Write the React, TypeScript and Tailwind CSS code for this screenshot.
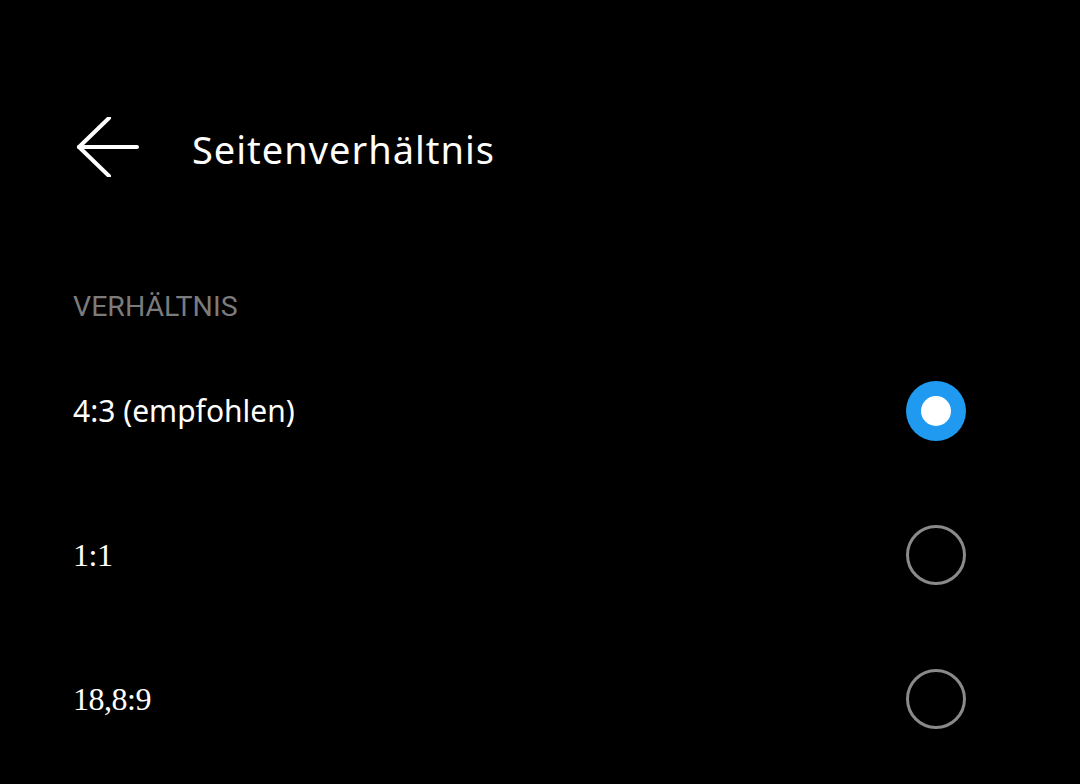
import React from "react";

const rows = [
  { label: "4:3 (empfohlen)", selected: true, serif: false },
  { label: "1:1", selected: false, serif: true },
  { label: "18,8:9", selected: false, serif: true },
];

function Radio({ selected }: { selected: boolean }) {
  if (selected) {
    return (
      <div className="w-[60px] h-[60px] rounded-full bg-[#1f9af0] flex items-center justify-center">
        <div className="w-[30px] h-[30px] rounded-full bg-white" />
      </div>
    );
  }
  return <div className="w-[60px] h-[60px] rounded-full border-[3px] border-[#8a8a8a]" />;
}

export default function App() {
  return (
    <div className="w-[1080px] h-[784px] bg-black overflow-hidden text-white" style={{ fontFamily: "'Noto Sans', sans-serif" }}>
      <div className="flex items-center pt-[117px] pl-[76px]">
        <svg width="64" height="60" viewBox="0 0 64 60" fill="none" stroke="white" strokeWidth="4" strokeLinecap="round" strokeLinejoin="round">
          <path d="M3 30 H61" />
          <path d="M33 1 L3 30 L33 59" />
        </svg>
        <div className="ml-[52px] mt-[4px] text-[38px] leading-[48px] tracking-[1px] text-white">Seitenverhältnis</div>
      </div>
      <div className="px-[73px] pr-[114px]">
        <div className="mt-[113px] mb-[15px] text-[28.5px] leading-[34px] text-[#7b7b7b]" style={{ fontFamily: "Roboto, sans-serif" }}>
          VERHÄLTNIS
        </div>
        {rows.map((r) => (
          <div key={r.label} className="h-[144px] flex items-center justify-between">
            <span
              className={r.serif ? "text-[32px] leading-[40px] tracking-[-0.5px]" : "text-[30px] leading-[40px]"}
              style={{ fontFamily: r.serif ? "'Liberation Serif', serif" : "'Noto Sans', sans-serif" }}
            >
              {r.label}
            </span>
            <Radio selected={r.selected} />
          </div>
        ))}
      </div>
    </div>
  );
}
